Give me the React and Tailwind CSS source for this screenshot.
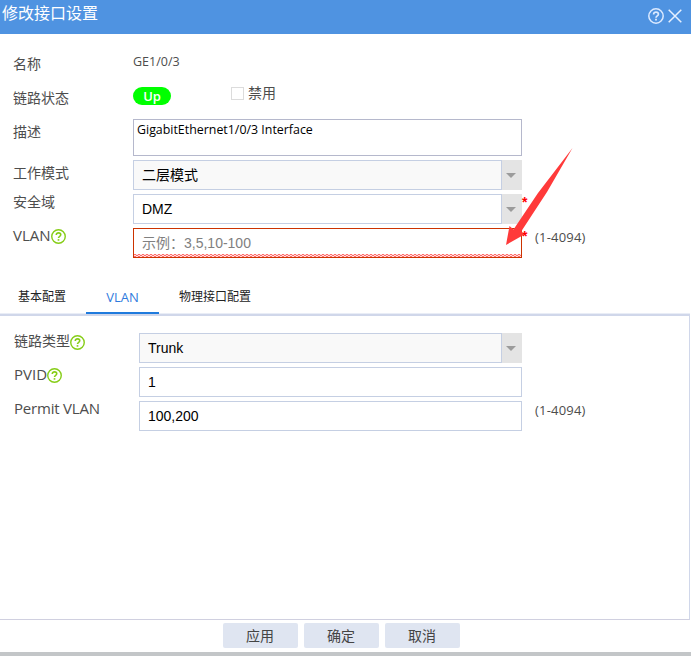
import React from "react";

const ui = "font-['Open_Sans','Noto_Sans_CJK_SC',sans-serif]";
const arial = "font-['Liberation_Sans','Noto_Sans_CJK_SC',sans-serif]";

function HelpIcon({ className }) {
  return (
    <svg className={className} viewBox="0 0 16 16" fill="none" stroke="currentColor">
      <circle cx="8" cy="8" r="7.2" strokeWidth="1.5" />
      <path d="M5.6 6.4C5.6 4.9 6.6 4.1 8 4.1s2.400.8 2.400 2.100c0 1.600-2.400 1.700-2.400 3.500" strokeWidth="1.7" />
      <path d="M8 10.800v1.700" strokeWidth="1.800" />
    </svg>
  );
}

function Label({ children, help, className = "w-[120px] text-sm" }) {
  return (
    <div className={`flex h-5 shrink-0 whitespace-nowrap leading-5 text-[#4d4d4d] ${className}`}>
      {children}
      {help && <HelpIcon className="mt-[4px] size-[15px] shrink-0 text-[#86cd17]" />}
    </div>
  );
}

function Select({ value, className, box = "" }) {
  return (
    <div className={`flex h-[30px] shrink-0 ${className}`}>
      <div className={`flex flex-1 items-center border border-[#c5cfe3] pl-2 text-sm text-black ${arial} ${box}`}>{value}</div>
      <div className="flex w-5 items-center justify-center bg-[#e4e4e4]">
        <svg className="mr-0.5 h-[5px] w-2.5" viewBox="0 0 10 5">
          <path d="M0 0h10L5 5z" fill="#9b9b9b" />
        </svg>
      </div>
    </div>
  );
}

function Star() {
  return <span className="h-4 w-[13px] shrink-0 font-['Liberation_Sans',sans-serif] text-sm leading-4 font-bold text-[#f00]">*</span>;
}

function Range({ className = "" }) {
  return <span className={`-mt-px h-5 text-[13px] leading-5 tracking-[0.2px] text-[#4d4d4d] ${className}`}>(1-4094)</span>;
}

function Button({ children }) {
  return (
    <button className="flex h-[25px] w-[75px] items-center justify-center rounded-[2px] bg-[#dfe5f1] pt-px pr-px text-sm text-[#444]">
      {children}
    </button>
  );
}

export default function App() {
  return (
    <div className={`relative flex h-[656px] w-[691px] flex-col overflow-hidden bg-white ${ui}`}>
      <header className="flex h-[34px] shrink-0 bg-[#4f93e1] text-white">
        <h1 className="ml-0.5 mt-[3px] flex-1 text-base leading-5">修改接口设置</h1>
        <HelpIcon className="mt-2 size-4 text-[#dceaff]" />
        <svg className="mt-[9px] mr-[9px] ml-1 size-[14px]" viewBox="0 0 14 14" stroke="#e6f0ff" strokeWidth="1.5">
          <path d="M.7.7l12.600 12.600M13.300.7L.7 13.300" />
        </svg>
      </header>

      <section className="h-[252px] shrink-0 pt-4 pl-[13px]">
        <div className="flex h-[30px]">
          <Label className="mt-1 w-[120px] text-sm">名称</Label>
          <span className="mt-0.5 h-5 text-[12.5px] leading-5 text-[#4d4d4d]">GE1/0/3</span>
        </div>
        <div className="flex h-[39px]">
          <Label className="mt-2 w-[120px] text-sm">链路状态</Label>
          <span className="mt-[7px] flex h-[18px] w-[38px] items-center justify-center rounded-full bg-[#0f0] pt-px text-[13px] font-semibold text-white">Up</span>
          <span className="mt-[7px] ml-[60px] size-[13px] border border-[#dcdcdc]" />
          <span className="mt-[3px] ml-1 h-5 text-sm leading-5 text-[#4d4d4d]">禁用</span>
        </div>
        <div className="flex h-[41px]">
          <Label className="mt-[3px] w-[120px] text-sm">描述</Label>
          <div className="h-[37px] w-[389px] border border-[#b5b8cc] px-[3px] pt-px text-[12.4px] leading-[18px] text-black">GigabitEthernet1/0/3 Interface</div>
        </div>
        <div className="flex h-[34px]">
          <Label className="mt-[3px] w-[120px] text-sm">工作模式</Label>
          <Select value="二层模式" className="w-[389px]" box="bg-[#f9f9f9]" />
        </div>
        <div className="flex h-[34px]">
          <Label className="-mt-0.5 w-[120px] text-sm">安全域</Label>
          <Select value="DMZ" className="w-[389px]" />
          <Star />
        </div>
        <div className="flex h-[30px]">
          <Label help className="-mt-[3px] w-[120px] text-[15px]">VLAN</Label>
          <div className={`flex h-[30px] w-[389px] flex-col border border-[#cc3300] text-sm text-[#808080] ${arial}`}>
            <div className="h-[25px] pl-2 leading-[28px]">示例：3,5,10-100</div>
            <svg className="h-[3px] w-full" shapeRendering="crispEdges">
              <defs>
                <pattern id="wave" width="4" height="4" patternUnits="userSpaceOnUse">
                  <path d="M0 0h2v1H0zM2 1h2v1H2zM0 2h2v1H0z" fill="#ff6b6b" />
                </pattern>
              </defs>
              <rect width="387" height="3" fill="#ffdede" />
              <rect width="387" height="3" fill="url(#wave)" />
            </svg>
          </div>
          <Star />
          <Range />
        </div>
      </section>

      <nav className="flex h-[28px] shrink-0 text-xs leading-[22px] text-[#222]">
        <span className="w-[86px] border-b border-[#e9edf6] pl-[18px]">基本配置</span>
        <span className="w-[73px] border-b-2 border-[#1f7bdd] text-center text-[13px] text-[#2f7bdd]">VLAN</span>
        <span className="mr-px flex-1 border-b border-[#e9edf6] pl-5">物理接口配置</span>
      </nav>

      <section className="mr-px h-[306px] shrink-0 border-t-2 border-r border-b border-t-[#d0d7ea] border-r-[#d0d7ea] border-b-[#d0d0e0] pt-[17px] pl-3.5">
        <div className="flex h-[34px]">
          <Label help className="-mt-0.5 w-[125px] text-sm">链路类型</Label>
          <Select value="Trunk" className="w-[383px]" box="bg-[#f9f9f9]" />
        </div>
        <div className="flex h-[34px]">
          <Label help className="-mt-[3px] w-[125px] text-[15px]">PVID</Label>
          <div className={`h-[30px] w-[383px] border border-[#c5cfe3] pl-2 text-sm leading-[29px] text-black ${arial}`}>1</div>
        </div>
        <div className="flex h-[34px]">
          <Label className="-mt-[3px] w-[125px] text-[15px] tracking-[-0.2px]">Permit VLAN</Label>
          <div className={`h-[30px] w-[383px] border border-[#c5cfe3] pl-2 text-sm leading-[29px] text-black ${arial}`}>100,200</div>
          <Range className="ml-[13px]" />
        </div>
      </section>

      <footer className="flex h-[36px] shrink-0 justify-center gap-1.5 border-b-4 border-[#c3c6c8] pt-[3px] pr-2">
        <Button>应用</Button>
        <Button>确定</Button>
        <Button>取消</Button>
      </footer>

      <svg className="pointer-events-none absolute top-[145px] left-[500px] h-[105px] w-[80px]" viewBox="500 145 80 105">
        <path d="M572.500 148L547 192L521.500 231L523.500 235L506 245L509.500 226L513.500 229.500L538 193z" fill="#ff3a3a" />
      </svg>
    </div>
  );
}
